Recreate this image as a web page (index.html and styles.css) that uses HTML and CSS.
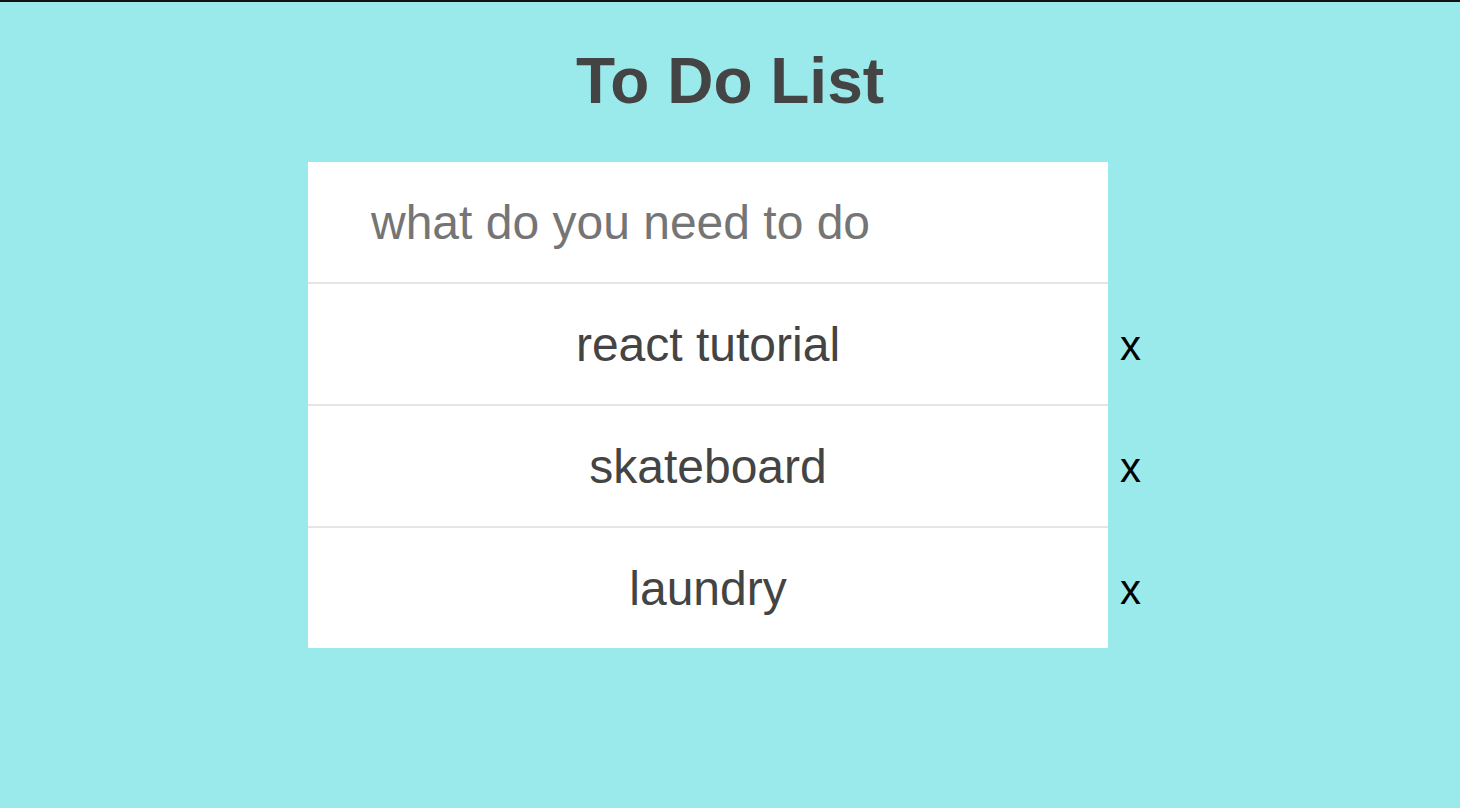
FILE: index.html
```html
<!DOCTYPE html>
<html>
<head>
<meta charset="utf-8">
<link rel="stylesheet" href="styles.css">
</head>
<body>
<div class="app">
  <h1 class="title">To Do List</h1>
  <div class="board">
    <div class="list">
      <div class="row input-row"><input class="new-todo" type="text" placeholder="what do you need to do"><span class="spacer"></span></div>
      <div class="row item"><span class="text">react tutorial</span><span class="del">x</span></div>
      <div class="row item"><span class="text">skateboard</span><span class="del">x</span></div>
      <div class="row item"><span class="text">laundry</span><span class="del">x</span></div>
    </div>
  </div>
</div>
</body>
</html>
```
FILE: styles.css
```css
html, body {
  margin: 0;
  padding: 0;
  height: 100%;
}
body {
  background: #9beaeb;
  border-top: 2px solid #111;
  box-sizing: border-box;
  font-family: "Liberation Sans", Arial, Helvetica, sans-serif;
}
.app {
  display: flex;
  flex-direction: column;
  align-items: center;
}
.title {
  margin: 42px 0 0 0;
  font-size: 64px;
  line-height: 74px;
  font-weight: bold;
  color: #444;
}
.board {
  margin-top: 44px;
  width: 844px;
}
.list {
  display: flex;
  flex-direction: column;
}
.row {
  display: flex;
  align-items: center;
}
.new-todo {
  width: 800px;
  height: 120px;
  box-sizing: border-box;
  border: none;
  outline: none;
  background: #fff;
  padding: 0 0 0 63px;
  margin: 0;
  font-family: "Liberation Sans", Arial, Helvetica, sans-serif;
  font-size: 48px;
  color: #444;
}
.new-todo::placeholder {
  color: #757575;
}
.item .text {
  width: 800px;
  height: 120px;
  background: #fff;
  border-top: 2px solid #e5e5e5;
  display: flex;
  align-items: center;
  justify-content: center;
  font-size: 48px;
  color: #444;
}
.del {
  margin-left: 12px;
  font-size: 42px;
  color: #000;
  padding-top: 6px;
}
```
